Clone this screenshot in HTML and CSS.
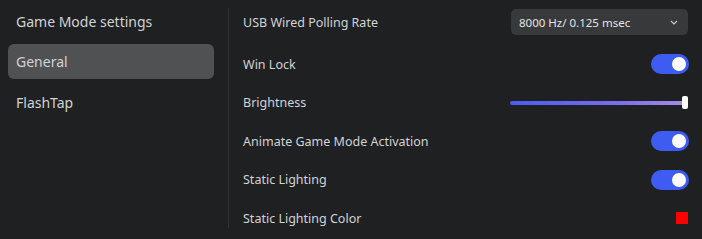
FILE: index.html
```html
<!DOCTYPE html>
<html lang="en">
    <head>
        <meta charset="UTF-8" />
        <link rel="stylesheet" href="styles.css">
        <title>Game Mode settings</title>
    </head>
    <body>
        <div class="app">
            <nav class="sidebar">
                <h2 class="side-title">Game Mode settings</h2>
                <button class="side-item active">General</button>
                <button class="side-item">FlashTap</button>
            </nav>
            <main class="settings">
                <div class="row row-first">
                    <span class="label">USB Wired Polling Rate</span>
                    <div class="select">
                        <span>8000 Hz/ 0.125 msec</span>
                        <svg width="8" height="5" viewBox="0 0 8 5"><path d="M1 1l3 3 3-3" fill="none" stroke="#c8c8c8" stroke-width="1.2" /></svg>
                    </div>
                </div>
                <div class="row row-gap">
                    <span class="label">Win Lock</span>
                    <span class="toggle on"></span>
                </div>
                <div class="row">
                    <span class="label">Brightness</span>
                    <div class="slider"><span class="thumb"></span></div>
                </div>
                <div class="row">
                    <span class="label">Animate Game Mode Activation</span>
                    <span class="toggle on"></span>
                </div>
                <div class="row">
                    <span class="label">Static Lighting</span>
                    <span class="toggle on"></span>
                </div>
                <div class="row">
                    <span class="label">Static Lighting Color</span>
                    <span class="swatch"></span>
                </div>
            </main>
        </div>
    </body>
</html>
```

FILE: styles.css
```css
* {
    margin: 0;
    padding: 0;
    box-sizing: border-box;
}
:root {
    --bg: #1e2022;
    --text: #d2d3d5;
    --blue: #3e5cf2;
    --line: #303234;
}
body {
    background-color: var(--bg);
    color: var(--text);
    font-family: 'Noto Sans', sans-serif;
    width: 702px;
    height: 239px;
    overflow: hidden;
}

.app {
    display: flex;
    height: 239px;
}

/* ===== sidebar ===== */
.sidebar {
    width: 228px;
    padding: 0 14px 0 8px;
    display: flex;
    flex-direction: column;
}
.side-title {
    font-size: 14px;
    font-weight: 400;
    height: 42px;
    line-height: 43px;
    padding-left: 8px;
    color: var(--text);
}
.side-item {
    background: none;
    border: none;
    color: var(--text);
    font-family: inherit;
    font-size: 14px;
    text-align: left;
    padding-left: 8px;
    height: 35px;
    border-radius: 6px;
    margin-top: 2px;
}
.side-item + .side-item {
    margin-top: 6px;
}
.side-item.active {
    background-color: #505153;
}

/* ===== settings ===== */
.settings {
    flex: 1;
    border-left: 1px solid var(--line);
    margin: 8px 0 11px;
    padding: 0 13px 0 14px;
}
.row {
    display: flex;
    justify-content: space-between;
    align-items: center;
    height: 38.5px;
}
.row-first {
    height: 28px;
}
.row-gap {
    margin-top: 9px;
}
.label {
    font-size: 12.5px;
}

.select {
    width: 177px;
    height: 26px;
    margin-right: 1px;
    background-color: #37393b;
    border-radius: 5px;
    display: flex;
    align-items: center;
    justify-content: space-between;
    padding: 0 10px 0 8px;
    font-size: 11.5px;
    color: #e4e4e4;
}

.toggle {
    width: 38px;
    height: 20px;
    border-radius: 10px;
    background-color: var(--blue);
    position: relative;
}
.toggle::after {
    content: '';
    position: absolute;
    top: 3px;
    right: 3px;
    width: 14px;
    height: 14px;
    border-radius: 50%;
    background-color: #fff;
}

.slider {
    width: 178px;
    height: 4px;
    margin-right: 1px;
    border-radius: 2px;
    background: linear-gradient(90deg, #4a5cf2, #7a6cf0 60%, #a68ee6);
    position: relative;
}
.thumb {
    position: absolute;
    right: 0;
    top: -5px;
    width: 6px;
    height: 13px;
    border-radius: 2px;
    background-color: #fff;
}

.swatch {
    width: 12px;
    height: 12px;
    background-color: #ff0000;
    margin-right: 1px;
}
```
